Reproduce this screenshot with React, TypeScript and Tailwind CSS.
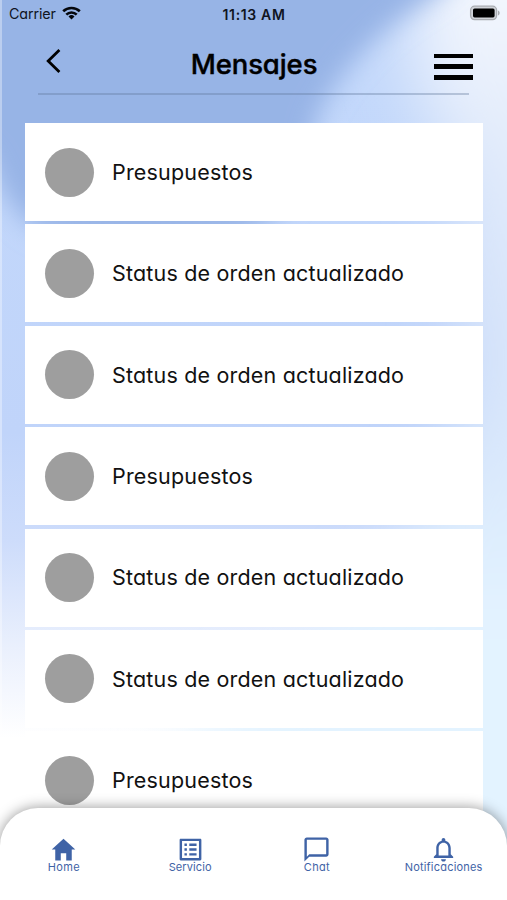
import { IoMdHome } from 'react-icons/io';
import { MdListAlt, MdChatBubbleOutline, MdNotificationsNone } from 'react-icons/md';

const messages = [
  'Presupuestos',
  'Status de orden actualizado',
  'Status de orden actualizado',
  'Presupuestos',
  'Status de orden actualizado',
  'Status de orden actualizado',
  'Presupuestos',
];

function Backdrop() {
  return (
    <svg className="absolute inset-0 h-full w-full" viewBox="0 0 507 900" preserveAspectRatio="none">
      <defs>
        <linearGradient id="base" x1="0" y1="0" x2="0" y2="1">
          <stop offset="0.1" stopColor="#c3d8fb" />
          <stop offset="0.48" stopColor="#c0d4fa" />
          <stop offset="0.6" stopColor="#cddcfb" />
          <stop offset="0.72" stopColor="#eaf0fd" />
          <stop offset="0.82" stopColor="#ffffff" />
        </linearGradient>
        <linearGradient id="side" x1="0" y1="0" x2="0" y2="1">
          <stop offset="0" stopColor="#fbfcff" />
          <stop offset="0.2" stopColor="#e3ecfb" />
          <stop offset="0.4" stopColor="#d8e5fa" />
          <stop offset="0.52" stopColor="#dae9fc" />
          <stop offset="0.66" stopColor="#e3f3ff" />
          <stop offset="1" stopColor="#e3f4ff" />
        </linearGradient>
        <filter id="soft" x="-50%" y="-50%" width="200%" height="200%">
          <feGaussianBlur stdDeviation="13" />
        </filter>
        <filter id="softer" x="-50%" y="-50%" width="200%" height="200%">
          <feGaussianBlur stdDeviation="32" />
        </filter>
      </defs>
      <rect width="507" height="900" fill="url(#base)" />
      <path d="M430 -80H640V980H200L180 740L300 660L400 560L465 400L455 180L410 60Z" fill="url(#side)" filter="url(#softer)" />
      <path d="M-60 -60H500L434 -4Q350 45 316 120Q300 215 240 236Q90 250 40 230Q5 210 -10 160L-60 120Z" fill="#97b4e6" filter="url(#soft)" />
      <rect width="2" height="900" fill="#ffffff" opacity="0.35" />
    </svg>
  );
}

function StatusBar() {
  return (
    <div className="flex h-7 items-center pl-[9px] pr-[7px] text-[#10151f]">
      <div className="flex flex-1 items-center gap-[6px]">
        <span className="text-[14.3px] tracking-[-0.1px]">Carrier</span>
        <svg className="-mt-[2px]" width="19" height="14" viewBox="0 0 19 14" fill="none" stroke="#05070c" strokeWidth="2.6">
          <path d="M1.2 5.3a11.9 11.9 0 0 1 16.6 0" />
          <path d="M4.3 8.6a7.4 7.4 0 0 1 10.4 0" />
          <path d="M9.5 13.6l-3-3.1a4.3 4.3 0 0 1 6 0z" fill="#05070c" stroke="none" />
        </svg>
      </div>
      <span className="mr-[1px] text-[14px] font-semibold tracking-[0.65px]">11:13 AM</span>
      <div className="-mt-[2px] flex flex-1 justify-end">
        <svg width="31" height="16" viewBox="0 0 31 16">
          <rect x="1.6" y="1.2" width="26" height="13.4" rx="4" fill="#d0d3d8" stroke="#a9acb1" strokeWidth="1.3" />
          <rect x="4" y="3.4" width="21.6" height="9" rx="1.6" fill="#000" />
          <path d="M29 5.4c2.2 1 2.2 4 0 5z" fill="#a9acb1" />
        </svg>
      </div>
    </div>
  );
}

function Header() {
  return (
    <div className="mx-[38px]">
      <header className="flex h-[65px] items-start justify-between pl-[8px]">
        <svg className="mt-[20px]" width="15" height="26" viewBox="0 0 15 26" fill="none" stroke="#000" strokeWidth="2.8">
          <path d="M13.4 2L2.2 13L13.4 24" />
        </svg>
        <h1 className="mt-[17px] pl-[13px] text-[27.5px] font-medium leading-[38px] tracking-[-0.1px] [-webkit-text-stroke:0.4px_#000]">
          Mensajes
        </h1>
        <div className="-mr-[4px] mt-[25.5px] flex flex-col gap-[6px]">
          <span className="h-[4.7px] w-[39px] bg-black" />
          <span className="h-[4.7px] w-[39px] bg-black" />
          <span className="h-[4.7px] w-[39px] bg-black" />
        </div>
      </header>
      <div className="h-[2px] bg-[#5f7697]/35" />
    </div>
  );
}

function MessageCard({ title }: { title: string }) {
  return (
    <li className="flex h-[98px] shrink-0 items-center gap-[18px] bg-white pl-5">
      <span className="size-[49px] rounded-full bg-[#9e9e9e]" />
      <span className="text-[21.5px] tracking-[0.18px] text-[#111]">{title}</span>
    </li>
  );
}

function TabBar() {
  return (
    <nav className="absolute inset-x-0 bottom-0 grid h-[92px] grid-cols-4 rounded-t-[38px] bg-white text-[#3f63a6] shadow-[0_0_14px_rgba(0,0,0,0.42)]">
      <div className="flex flex-col items-center pl-px pt-[27px]">
        <IoMdHome size={29} />
        <span className="-mt-[3.5px] text-[11px] leading-[12px] tracking-[0.3px]">Home</span>
      </div>
      <div className="flex flex-col items-center pt-[27px]">
        <MdListAlt size={29} />
        <span className="-mt-[3.5px] text-[11px] leading-[12px] tracking-[0.1px]">Servicio</span>
      </div>
      <div className="flex flex-col items-center pt-[27px]">
        <MdChatBubbleOutline size={29} />
        <span className="-mt-[3.5px] text-[11px] leading-[12px] tracking-[0.3px]">Chat</span>
      </div>
      <div className="flex flex-col items-center pt-[27px]">
        <MdNotificationsNone size={29} />
        <span className="-mt-[3.5px] text-[11px] leading-[12px] tracking-[0.2px]">Notificaciones</span>
      </div>
    </nav>
  );
}

export default function App() {
  return (
    <div className="relative h-[900px] w-[507px] overflow-hidden bg-white font-['Inter',sans-serif] text-black [font-feature-settings:'cv11']">
      <Backdrop />
      <div className="relative flex h-full flex-col">
        <StatusBar />
        <Header />
        <ul className="ml-[25px] mr-[24.5px] mt-[28px] flex flex-col gap-[3.4px]">
          {messages.map((title, i) => (
            <MessageCard key={i} title={title} />
          ))}
        </ul>
      </div>
      <TabBar />
    </div>
  );
}
